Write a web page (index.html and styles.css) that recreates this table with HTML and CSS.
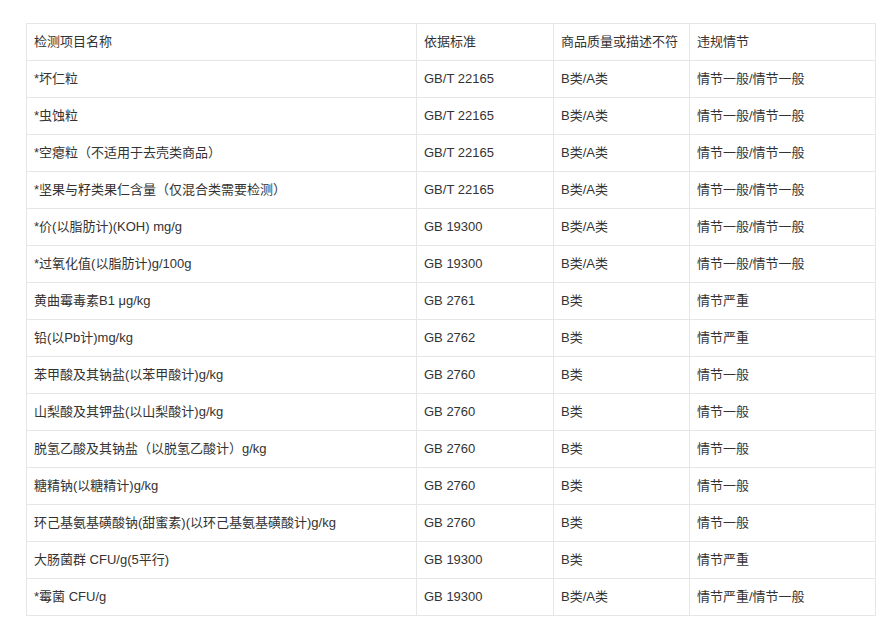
FILE: index.html
```html
<!DOCTYPE html>
<html lang="zh-CN">
<head>
<meta charset="utf-8">
<link rel="stylesheet" href="styles.css">
</head>
<body>
<div class="wrap">
<table class="spec">
<colgroup>
<col class="c1"><col class="c2"><col class="c3"><col class="c4">
</colgroup>
<tbody>
<tr><td>检测项目名称</td><td>依据标准</td><td>商品质量或描述不符</td><td>违规情节</td></tr>
<tr><td>*坏仁粒</td><td>GB/T 22165</td><td>B类/A类</td><td>情节一般/情节一般</td></tr>
<tr><td>*虫蚀粒</td><td>GB/T 22165</td><td>B类/A类</td><td>情节一般/情节一般</td></tr>
<tr><td>*空瘪粒（不适用于去壳类商品）</td><td>GB/T 22165</td><td>B类/A类</td><td>情节一般/情节一般</td></tr>
<tr><td>*坚果与籽类果仁含量（仅混合类需要检测）</td><td>GB/T 22165</td><td>B类/A类</td><td>情节一般/情节一般</td></tr>
<tr><td>*价(以脂肪计)(KOH) mg/g</td><td>GB 19300</td><td>B类/A类</td><td>情节一般/情节一般</td></tr>
<tr><td>*过氧化值(以脂肪计)g/100g</td><td>GB 19300</td><td>B类/A类</td><td>情节一般/情节一般</td></tr>
<tr><td>黄曲霉毒素B1 μg/kg</td><td>GB 2761</td><td>B类</td><td>情节严重</td></tr>
<tr><td>铅(以Pb计)mg/kg</td><td>GB 2762</td><td>B类</td><td>情节严重</td></tr>
<tr><td>苯甲酸及其钠盐(以苯甲酸计)g/kg</td><td>GB 2760</td><td>B类</td><td>情节一般</td></tr>
<tr><td>山梨酸及其钾盐(以山梨酸计)g/kg</td><td>GB 2760</td><td>B类</td><td>情节一般</td></tr>
<tr><td>脱氢乙酸及其钠盐（以脱氢乙酸计）g/kg</td><td>GB 2760</td><td>B类</td><td>情节一般</td></tr>
<tr><td>糖精钠(以糖精计)g/kg</td><td>GB 2760</td><td>B类</td><td>情节一般</td></tr>
<tr><td>环己基氨基磺酸钠(甜蜜素)(以环己基氨基磺酸计)g/kg</td><td>GB 2760</td><td>B类</td><td>情节一般</td></tr>
<tr><td>大肠菌群 CFU/g(5平行)</td><td>GB 19300</td><td>B类</td><td>情节严重</td></tr>
<tr><td>*霉菌 CFU/g</td><td>GB 19300</td><td>B类/A类</td><td>情节严重/情节一般</td></tr>
</tbody>
</table>
</div>
</body>
</html>
```

FILE: styles.css
```css
html, body {
  margin: 0;
  padding: 0;
  background: #ffffff;
}
.wrap {
  padding: 23px 0 0 26px;
}
.spec {
  border-collapse: collapse;
  table-layout: fixed;
  width: 849px;
  font-family: "Liberation Sans", "Noto Sans CJK SC", sans-serif;
  font-size: 13px;
  color: #333333;
}
.c1 { width: 390px; }
.c2 { width: 137px; }
.c3 { width: 136px; }
.c4 { width: 186px; }
.spec td {
  border: 1px solid #e6e6e6;
  height: 36px;
  padding: 0 7px;
  vertical-align: middle;
  white-space: nowrap;
  line-height: 20px;
}
```
